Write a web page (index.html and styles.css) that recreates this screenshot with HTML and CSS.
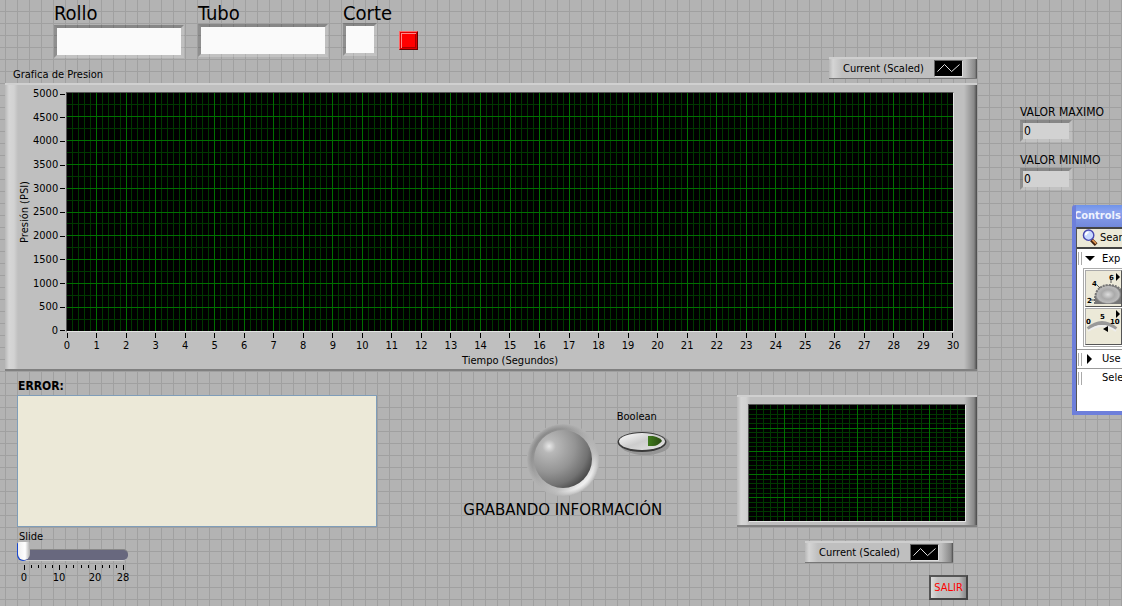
FILE: index.html
```html
<!DOCTYPE html>
<html lang="es">
<head>
<meta charset="utf-8">
<title>Grafica de Presion</title>
<link rel="stylesheet" href="styles.css">
</head>
<body>
<main class="panel">
  <div class="work">
    <div class="inputs">
      <div class="field field-rollo"><label for="rollo">Rollo</label><input id="rollo" class="sunken" type="text"></div>
      <div class="field field-tubo"><label for="tubo">Tubo</label><input id="tubo" class="sunken" type="text"></div>
      <div class="field field-corte"><label for="corte">Corte</label><input id="corte" class="sunken" type="text"></div>
      <span class="alarm"></span>
    </div>
    <div class="chart-head">
      <h2>Grafica de Presion</h2>
      <div class="legend"><span>Current (Scaled)</span><svg class="plot-icon" viewBox="0 0 29 17"><path d="M2 12 10 4 18 12 27 4"/></svg></div>
    </div>
    <section class="frame main-chart">
      <div class="y-title"><span>Presión (PSI)</span></div>
      <div class="y-axis" id="yAxis"></div>
      <svg class="plot" id="mainPlot"></svg>
      <div class="x-axis" id="xAxis"></div>
      <div class="x-title">Tiempo (Segundos)</div>
    </section>
    <div class="lower">
      <div class="error-col">
        <label class="error-label" for="error">ERROR:</label>
        <textarea id="error" class="error-box" readonly></textarea>
        <label class="slide-label" for="slide">Slide</label>
        <input id="slide" class="slide" type="range" min="0" max="28" value="0">
        <div class="slide-scale">
          <svg class="slide-ticks" viewBox="0 0 101 5"><path d="M1 0V5M36 0V5M72 0V5M100 0V5"/><path d="M8 0V3M15 0V3M22 0V3M29 0V3M43 0V3M50 0V3M58 0V3M65 0V3M79 0V3M86 0V3M93 0V3"/></svg>
          <div class="slide-nums"><span>0</span><span>10</span><span>20</span><span>28</span></div>
        </div>
      </div>
      <div class="status-col">
        <div class="status-row">
          <svg class="led" viewBox="0 0 72 74">
            <defs>
              <linearGradient id="ring" x1="0.15" y1="0.15" x2="0.85" y2="0.85"><stop offset="0" stop-color="#858585"/><stop offset=".45" stop-color="#aaa"/><stop offset=".75" stop-color="#c0c0c0"/><stop offset="1" stop-color="#fff"/></linearGradient>
              <radialGradient id="edge"><stop offset=".86" stop-color="#b3b3b3" stop-opacity="0"/><stop offset="1" stop-color="#b3b3b3"/></radialGradient>
              <radialGradient id="ball" cx=".26" cy=".28" r=".9"><stop offset="0" stop-color="#e8e8e8"/><stop offset=".13" stop-color="#b8b8b8"/><stop offset=".5" stop-color="#949494"/><stop offset=".75" stop-color="#727272"/><stop offset="1" stop-color="#333"/></radialGradient>
            </defs>
            <circle cx="36" cy="37" r="36" fill="url(#ring)"/>
            <circle cx="36" cy="37" r="36.500" fill="url(#edge)"/>
            <circle cx="36" cy="36" r="29" fill="url(#ball)"/>
          </svg>
          <div class="boolean">
            <span id="boolLabel">Boolean</span>
            <button class="oval" type="button" aria-labelledby="boolLabel">
              <svg viewBox="0 0 56 26">
                <defs><linearGradient id="pill" x1="0" y1="0" x2="1" y2="1"><stop offset="0" stop-color="#fff"/><stop offset=".5" stop-color="#ccc"/><stop offset="1" stop-color="#e6e6e6"/></linearGradient>
                <linearGradient id="arrow" x1="0" y1="0" x2="1" y2="0"><stop offset="0" stop-color="#3f7a1c"/><stop offset="1" stop-color="#2a4a12"/></linearGradient></defs>
                <ellipse cx="28" cy="14" rx="25" ry="11" fill="#969696"/>
                <ellipse cx="25" cy="12" rx="24.500" ry="10" fill="#3a3a3a"/>
                <ellipse cx="25" cy="11.500" rx="23" ry="8.500" fill="url(#pill)"/>
                <path d="M31 6H36Q44 8 45 11 41 16 36 16H31Z" fill="url(#arrow)"/>
              </svg>
            </button>
          </div>
        </div>
        <p class="recording">GRABANDO INFORMACIÓN</p>
      </div>
      <div class="mini-col">
        <section class="frame mini-chart"><svg class="plot" id="miniPlot"></svg></section>
        <div class="legend"><span>Current (Scaled)</span><svg class="plot-icon" viewBox="0 0 29 17"><path d="M2 12 10 4 18 12 27 4"/></svg></div>
        <button class="exit" type="button">SALIR</button>
      </div>
    </div>
  </div>
  <aside class="readings">
    <label for="max">VALOR MAXIMO</label><input id="max" class="sunken reading" value="0" readonly>
    <label for="min">VALOR MINIMO</label><input id="min" class="sunken reading" value="0" readonly>
  </aside>
  <aside class="palette">
    <header>Controls</header>
    <div class="palette-body">
      <button class="search" type="button">
        <svg viewBox="0 0 18 18"><path d="M10 11 15 16" stroke="#402010" stroke-width="4"/><path d="M11 11 15 15" stroke="#d89050" stroke-width="2"/><circle cx="7" cy="6" r="5.500" fill="#c8d8ff" stroke="#4848b0" stroke-width="1.500"/><path d="M4 6Q4 3 7 3" stroke="#fff" stroke-width="2" fill="none"/></svg>
        <span>Sear</span>
      </button>
      <div class="cat"><i class="grip"></i><svg viewBox="0 0 10 10"><path d="M0 2H10L5 7Z"/></svg><span>Exp</span></div>
      <div class="tiles">
        <div class="tile">
          <svg viewBox="0 0 35 35">
            <defs><radialGradient id="knob"><stop offset="0" stop-color="#ddd"/><stop offset=".5" stop-color="#aaa"/><stop offset=".85" stop-color="#bbb"/><stop offset="1" stop-color="#777"/></radialGradient></defs>
            <path d="M9 33V27Q10 15 22 14 31 14 35 19V33Z" fill="url(#knob)"/>
            <path d="M9 33V27Q10 15 22 14 31 14 35 19" fill="none" stroke="#777" stroke-width="2" stroke-dasharray="2 1"/>
            <path d="M5 29H9M11 14 14 17M25 8V12" stroke="#555" fill="none"/>
            <path d="M30 2 34 6 30 10Z"/><text x="1" y="32">2</text><text x="6" y="15">4</text><text x="23" y="9">6</text>
          </svg>
        </div>
        <div class="tile">
          <svg viewBox="0 0 35 35"><path d="M2 20Q16 8 30 20" fill="none" stroke="#999" stroke-width="4"/><path d="M2 22Q16 12 30 22" fill="none" stroke="#eee" stroke-width="2"/><path d="M30 1 34 5 30 9ZM22 17V23L17 20Z"/><text x="0" y="15">0</text><text x="14" y="10">5</text><text x="24" y="15">10</text></svg>
        </div>
      </div>
      <div class="cat ruled"><i class="grip"></i><svg viewBox="0 0 10 10"><path d="M2 0V10L7 5Z"/></svg><span>Use</span></div>
      <div class="cat ruled"><i class="grip"></i><svg viewBox="0 0 10 10"></svg><span>Sele</span></div>
    </div>
  </aside>
</main>
<script src="charts.js"></script>
</body>
</html>
```
FILE: styles.css
```css
* { box-sizing: border-box; }
body {
  margin: 0;
  min-height: 100vh;
  overflow: hidden;
  font: 11px/14px "DejaVu Sans Condensed", "DejaVu Sans", sans-serif;
  color: #000;
}
button, input, textarea { font: inherit; color: inherit; margin: 0; }
button { padding: 0; }
.panel {
  position: relative;
  display: grid;
  grid-template-columns: minmax(0, 972fr) 145fr;
  min-height: 100vh;
  padding-left: 5px;
  overflow: hidden;
  background:
    linear-gradient(90deg, #a0a0a0 1px, transparent 1px) 5px 0 / 12px 12px,
    linear-gradient(#a0a0a0 1px, transparent 1px) 0 11px / 12px 12px,
    #b3b3b3;
}
.work { display: flex; flex-direction: column; }

.inputs { display: flex; align-items: flex-start; height: 57px; padding-left: 49px; }
.field { display: flex; flex-direction: column; width: 130px; margin-right: 14px; }
.field label { font-size: 20px; line-height: 26px; height: 25px; }
.field-tubo label { height: 24px; }
.field-corte label { height: 23px; }
.field-corte { width: 34px; margin: 0 22px 0 1px; }
.sunken {
  height: 33px;
  width: 100%;
  padding: 0 2px;
  border: 3px solid;
  border-color: rgba(0, 0, 0, .24) rgba(255, 255, 255, .16) rgba(255, 255, 255, .2) rgba(0, 0, 0, .2);
  border-radius: 0;
  background: #fafafa;
  background-clip: padding-box;
  outline: 0;
}
.alarm { width: 19px; height: 19px; margin-top: 31px; background: #f00; border: 1px solid; border-color: #f66 #600 #600 #f66; box-shadow: inset 1px 1px #d00, inset -1px -1px #d00, inset 2px 2px #f88, inset -2px -2px #a00; }

.chart-head { display: flex; justify-content: space-between; height: 26px; }
.chart-head h2 { margin: 11px 0 0 8px; font-size: 11px; font-weight: 400; }
.legend {
  display: flex;
  align-items: center;
  justify-content: space-between;
  width: 148px;
  height: 22px;
  padding: 0 14px;
  border-top: 2px solid #cfcfcf;
  border-bottom: 1px solid #777;
  background: linear-gradient(90deg, #b8b8b8, #d5d5d5 4px, #bfbfbf 13px, #bfbfbf calc(100% - 12px), #888 calc(100% - 2px), #4a4a4a);
}
.plot-icon { width: 29px; height: 17px; background: #000; border: 1px solid; border-color: #666 #ddd #ddd #666; }
.plot-icon path { fill: none; stroke: #fff; }

.frame {
  border-top: 2px solid #d0d0d0;
  border-bottom: 2px solid #808080;
  background: linear-gradient(90deg, #b8b8b8, #d6d6d6 4px, #d2d2d2 9px, #bfbfbf 13px, #bfbfbf calc(100% - 13px), #888 calc(100% - 3px), #484848);
}
.plot {
  display: block;
  width: 100%;
  height: 100%;
  background: #000;
  border: 1px solid;
  border-color: #555 #e4e4e4 #e4e4e4 #555;
  shape-rendering: crispEdges;
}
.plot .minor { stroke: #003800; }
.plot .major { stroke: #007000; }
.main-chart {
  display: grid;
  grid-template-columns: 14px 34px minmax(0, 1fr);
  grid-template-rows: 240px 22px 14px;
  height: 288px;
  padding: 7px 23px 0 13px;
}
.y-title { display: flex; align-items: center; justify-content: center; }
.y-title span { writing-mode: vertical-rl; transform: rotate(180deg); white-space: nowrap; }
.y-axis { display: flex; flex-direction: column; justify-content: space-between; padding: 2px 1px 1px; }
.y-axis span { display: flex; align-items: center; justify-content: flex-end; gap: 2px; height: 0; }
.y-axis span::after { content: ""; width: 5px; height: 1px; background: #000; }
.x-axis { grid-column: 3; display: flex; justify-content: space-between; padding: 1px 1px 0; }
.x-axis span { display: flex; flex-direction: column; align-items: center; gap: 1px; width: 0; }
.x-axis span::before { content: ""; width: 1px; height: 5px; flex: none; background: #000; }
.x-title { grid-column: 3; text-align: center; }

.lower { display: grid; grid-template-columns: 360fr 361fr 240px; padding: 7px 0 0 12px; }
.error-col { display: flex; flex-direction: column; }
.error-label { padding-left: 1px; font-size: 12px; font-weight: 700; line-height: 16px; height: 17px; }
.error-box { width: 100%; height: 132px; padding: 4px; resize: none; border: 1px solid #7f9db9; border-radius: 0; background: #ece9d8; outline: 0; }
.slide-label { margin: 3px 0 0 2px; }
.slide { appearance: none; width: 110px; height: 18px; margin-left: 1px; background: none; outline: 0; }
.slide::-webkit-slider-runnable-track { height: 12px; margin-top: 4px; border-radius: 5px; background: #68687e; border-top: 1px solid #888; border-bottom: 1px solid #ccc; }
.slide::-webkit-slider-thumb { appearance: none; width: 12px; height: 18px; margin-top: -8px; border-radius: 1px 1px 6px 6px; background: linear-gradient(90deg, #eee, #fff 60%, #aaa); box-shadow: -1px 1px #1848d0; }
.slide-scale { width: 116px; padding-top: 3px; }
.slide-ticks { display: block; width: 101px; height: 5px; margin-left: 6px; shape-rendering: crispEdges; }
.slide-ticks path { stroke: #000; }
.slide-nums { display: grid; grid-template-columns: 35fr 36fr 28fr 0; padding: 1px 10px 0 7px; }
.slide-nums span { display: flex; justify-content: center; width: 0; }

.status-col { display: flex; flex-direction: column; align-items: center; padding: 16px 0 0 12px; }
.status-row { display: grid; grid-template-columns: minmax(0, 1fr) 72px minmax(0, 1fr); width: 212px; }
.led { grid-column: 2; width: 72px; height: 74px; margin-top: 29px; }
.boolean { display: flex; flex-direction: column; align-items: flex-start; padding: 16px 0 0 18px; }
.oval { display: block; width: 56px; height: 26px; margin-top: 6px; border: 0; background: none; }
.oval svg { display: block; width: 56px; height: 26px; }
.recording { margin: 4px 0 0; font: 15px/18px "DejaVu Sans", sans-serif; white-space: nowrap; }

.mini-col { display: flex; flex-direction: column; align-items: flex-end; padding-top: 17px; }
.mini-chart { width: 100%; height: 132px; padding: 7px 11px 3px; }
.mini-col .legend { margin: 14px 24px 0 0; }
.exit { width: 39px; height: 25px; margin: 12px 9px 0 0; border: 2px solid; border-color: #555 #444 #444 #555; background: linear-gradient(90deg, #ddd, #c0c0c0 20%, #bbb 80%, #888); color: #f00; }

.readings { display: flex; flex-direction: column; align-items: flex-start; padding: 105px 0 0 43px; white-space: nowrap; }
.readings label { height: 15px; font-size: 12px; }
.reading { width: 52px; height: 22px; margin-bottom: 11px; padding: 0 1px; background-color: #d2d2d2; font-size: 12px; }

/* floating tool window, docked past the right edge */
.palette { position: absolute; top: 205px; right: 0; width: 50px; height: 210px; overflow: hidden; display: flex; flex-direction: column; border: solid #6d7fdb; border-width: 0 0 4px 4px; border-top-left-radius: 3px; background: #fff; }
.palette header { flex: none; height: 22px; margin-left: -4px; padding-left: 2px; font-weight: 700; line-height: 22px; color: #eef2ff; background: linear-gradient(#6f93ea, #8aa2ee 30%, #7288da); }
.palette-body { flex: 1; border-left: 1px solid #555; white-space: nowrap; }
.search { display: flex; align-items: center; width: 80px; height: 22px; gap: 1px; padding-left: 5px; border: 1px solid #444; border-width: 2px 0 2px; background: #ece9d8; }
.search svg { width: 17px; height: 18px; flex: none; }
.cat { display: flex; align-items: center; height: 19px; }
.cat svg { width: 10px; height: 10px; margin: 0 7px 0 3px; flex: none; }
.cat span { flex: none; }
.grip { width: 4px; height: 13px; flex: none; margin-left: 1px; border: solid #aaa; border-width: 0 1px; }
.ruled { border-top: 1px solid #999; height: 19px; }
.tiles { display: grid; gap: 1px; width: 60px; margin: 0 0 2px 6px; padding: 1px; border: 1px solid #aaa; background: #fff; }
.tile { width: 37px; height: 37px; border: 1px solid; border-color: #aaa #555 #555 #aaa; background: #ece9d8; }
.tile svg { display: block; width: 35px; height: 35px; }
.tile text { font: bold 7px "DejaVu Sans", sans-serif; }
```
FILE: charts.js
```js
const SVG = "http://www.w3.org/2000/svg";

function rule(svg, vertical, pct, kind) {
  const line = document.createElementNS(SVG, "line");
  const p = pct + "%";
  const ends = vertical ? { x1: p, x2: p, y1: 0, y2: "100%" } : { x1: 0, x2: "100%", y1: p, y2: p };
  for (const k in ends) line.setAttribute(k, ends[k]);
  line.setAttribute("class", kind);
  svg.appendChild(line);
}

function grid(id, cols, subCols, rows, subRows) {
  const svg = document.getElementById(id);
  for (const kind of ["minor", "major"]) {
    for (let i = 1; i < cols * subCols; i++)
      if ((i % subCols === 0) === (kind === "major")) rule(svg, true, i * 100 / (cols * subCols), kind);
    for (let i = 1; i < rows * subRows; i++)
      if ((i % subRows === 0) === (kind === "major")) rule(svg, false, i * 100 / (rows * subRows), kind);
  }
}

function labels(id, values) {
  const axis = document.getElementById(id);
  for (const v of values) {
    const s = document.createElement("span");
    s.textContent = v;
    axis.appendChild(s);
  }
}

grid("mainPlot", 30, 5, 10, 2);
grid("miniPlot", 6, 5, 5, 5);
labels("yAxis", Array.from({ length: 11 }, (_, i) => 5000 - i * 500));
labels("xAxis", Array.from({ length: 31 }, (_, i) => i));
```
